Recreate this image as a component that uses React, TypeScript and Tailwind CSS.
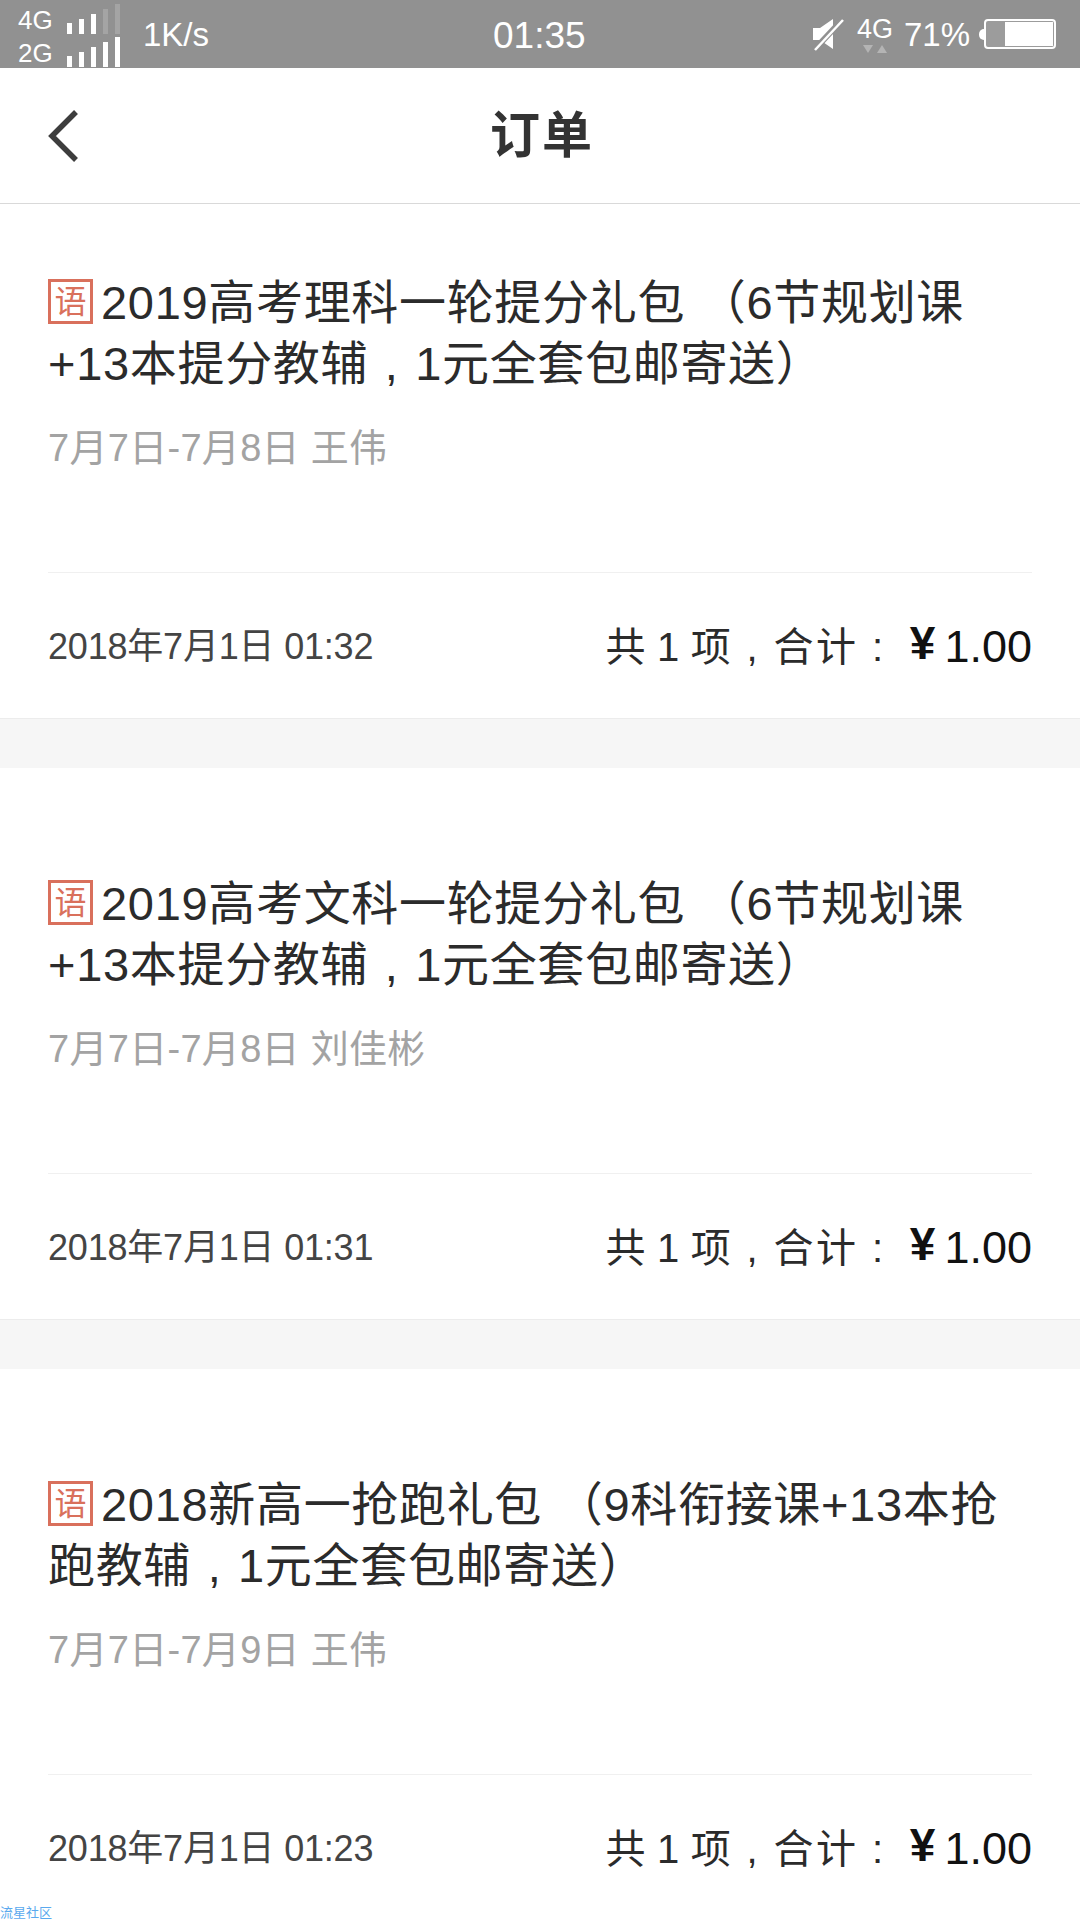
import React from "react";

const orders = [
  {
    lines: ["2019高考理科一轮提分礼包 （6节规划课", "+13本提分教辅,1元全套包邮寄送）"],
    meta: "7月7日-7月8日 王伟",
    time: "2018年7月1日 01:32",
  },
  {
    lines: ["2019高考文科一轮提分礼包 （6节规划课", "+13本提分教辅,1元全套包邮寄送）"],
    meta: "7月7日-7月8日 刘佳彬",
    time: "2018年7月1日 01:31",
  },
  {
    lines: ["2018新高一抢跑礼包 （9科衔接课+13本抢", "跑教辅,1元全套包邮寄送）"],
    meta: "7月7日-7月9日 王伟",
    time: "2018年7月1日 01:23",
  },
];

// the commas sit centred in a full-width cell, on the baseline
function Punct({ children }: { children: string }) {
  return <span className="inline-block w-[1em] text-center">{children}</span>;
}

function withPunct(text: string) {
  const parts = text.split(",");
  return parts.map((p, i) => (
    <React.Fragment key={i}>
      {p}
      {i < parts.length - 1 && <Punct>,</Punct>}
    </React.Fragment>
  ));
}

function Bars({ dim }: { dim?: boolean }) {
  const heights = [11, 15, 20, 25, 30];
  return (
    <div className="flex items-end gap-[7px]">
      {heights.map((h, i) => (
        <div
          key={i}
          className={dim && i > 2 ? "w-[5px] bg-[#a4a4a4]" : "w-[5px] bg-white"}
          style={{ height: h }}
        />
      ))}
    </div>
  );
}

function StatusBar() {
  return (
    <div className="relative flex h-[68px] items-center justify-between bg-[#919191] pl-[18px] pr-[24px] text-white">
      <div className="flex items-center">
        <div className="flex w-[102px] flex-col">
          <div className="flex h-[33px] items-end justify-between">
            <span className="text-[26px] leading-[27px]">4G</span>
            <Bars dim />
          </div>
          <div className="flex h-[33px] items-end justify-between">
            <span className="text-[26px] leading-[27px]">2G</span>
            <Bars />
          </div>
        </div>
        <span className="ml-[23px] text-[33px] leading-none">1K/s</span>
      </div>
      <span className="absolute left-[493px] top-[15px] text-[37px] leading-[42px]">01:35</span>
      <div className="flex items-center">
        <svg width="32" height="36" viewBox="0 0 32 36" className="mr-[13px]">
          <path d="M1 12h7l13-9v30l-13-9H1z" fill="#fff" />
          <path d="M2 34 31 3" stroke="#919191" strokeWidth="6" />
          <path d="M3 34 31 4" stroke="#fff" strokeWidth="2.5" />
        </svg>
        <div className="flex flex-col items-center">
          <span className="text-[27px] leading-[30px]">4G</span>
          <svg width="26" height="10" viewBox="0 0 26 10">
            <path d="M1 1h10L6 9zM15 9h10L20 1z" fill="#b4b4b4" />
          </svg>
        </div>
        <span className="ml-[11px] text-[33px] leading-none">71%</span>
        <div className="ml-[9px] h-[11px] w-[5px] rounded-l-full bg-white" />
        <div className="flex h-[30px] w-[72px] justify-end rounded-[4px] border-2 border-white bg-[#9c9c9c] p-[1px]">
          <div className="w-[48px] bg-white" />
        </div>
      </div>
    </div>
  );
}

function OrderCard({ lines, meta, time, first }: { lines: string[]; meta: string; time: string; first: boolean }) {
  return (
    <div className="border-b border-[#ececec] bg-white px-[48px]">
      <div className={first ? "h-[368px] pt-[68px]" : "h-[405px] pt-[105px]"}>
        <div className="text-[47px] leading-[61px] tracking-[0.68px] text-[#2b2b2b]">
          <div className="flex items-center">
            <span className="mr-[8px] mb-[2px] flex h-[45px] w-[45px] items-center justify-center border-[3px] border-[#d9705c] text-[32px] leading-none tracking-normal text-[#d9705c]">
              语
            </span>
            <span className="whitespace-pre">{lines[0]}</span>
          </div>
          <div className="whitespace-pre">{withPunct(lines[1])}</div>
        </div>
        <div className="mt-[30px] text-[38px] leading-[48px] tracking-[0.3px] text-[#a3a3a3]">{meta}</div>
      </div>
      <div className="flex h-[146px] items-center justify-between border-t border-[#f0f0f0] pt-[2px]">
        <span className="text-[36px] tracking-[-0.2px] text-[#444444]">{time}</span>
        <div className="flex items-center text-[#2b2b2b]">
          <span className="mr-[11px] whitespace-pre text-[40px] tracking-[2.7px] [word-spacing:-5px]">
            共 1 项<Punct>,</Punct>合计<Punct>:</Punct>
          </span>
          <span className="mb-[6px] text-[46px] font-bold text-[#111111]">¥</span>
          <span className="ml-[9px] text-[45px] text-[#111111]">1.00</span>
        </div>
      </div>
    </div>
  );
}

export default function App() {
  return (
    <div className="relative h-[1920px] w-[1080px] overflow-hidden bg-white font-['Liberation_Sans','Noto_Sans_CJK_SC',sans-serif]">
      <StatusBar />
      <div className="relative flex h-[136px] items-center justify-center border-b border-[#d9d9d9] bg-white pl-[4px] pt-[2px]">
        <svg width="34" height="54" viewBox="0 0 34 54" className="absolute left-[47px] top-[41px]" fill="none">
          <path d="M29 3 5 27l24 24" stroke="#3d3d3d" strokeWidth="5.5" />
        </svg>
        <span className="text-[50px] font-bold tracking-[2px] text-[#333333]">订单</span>
      </div>
      {orders.map((o, i) => (
        <div key={i}>
          <OrderCard lines={o.lines} meta={o.meta} time={o.time} first={i === 0} />
          {i < 2 && <div className="h-[49px] bg-[#f6f6f6]" />}
        </div>
      ))}
      <span className="absolute bottom-0 left-0 text-[13px] leading-[14px] text-[#5aa9ee]">流星社区</span>
    </div>
  );
}
